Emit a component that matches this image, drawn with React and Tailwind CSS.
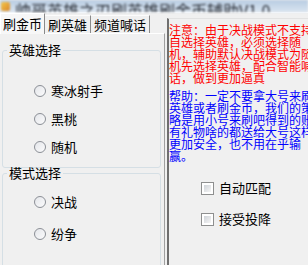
import React from 'react';

const FONT = { fontFamily: '"Noto Sans CJK SC", "Noto Sans", sans-serif' };

const Radio = ({ label }) => (
  <div className="flex items-center h-[14px]">
    <span className="ml-[31px] w-[12px] h-[12px] rounded-full border border-[#8b8f96] bg-gradient-to-br from-[#e4e6ea] to-[#fbfbfc]" />
    <span className="ml-[5px] text-[13px] leading-[14px] text-black">{label}</span>
  </div>
);

const Check = ({ label }) => (
  <div className="flex items-center h-[14px]">
    <span className="ml-[32px] w-[13px] h-[13px] border border-[#8e8f8f] bg-white p-[2px]">
      <span className="block w-full h-full bg-gradient-to-br from-[#cfd3d8] to-[#f6f6f6]" />
    </span>
    <span className="ml-[5px] text-[13px] leading-[14px] text-black">{label}</span>
  </div>
);

const GroupBox = ({ title, children, className }) => (
  <fieldset className={`mx-[2px] w-[159px] border border-[#d5dfe5] rounded-[3px] ${className}`}>
    <legend className="ml-[4px] px-[2px] text-[13px] leading-[14px] text-black">{title}</legend>
    {children}
  </fieldset>
);

export default function App() {
  const red = [
    '注意：由于决战模式不支持',
    '自选择英雄，必须选择随',
    '机，辅助默认决战模式为随',
    '机先选择英雄，配合智能喊',
    '话，做到更加逼真',
  ];
  const blue = [
    '帮助：一定不要拿大号来刷',
    '英雄或者刷金币，我们的策',
    '略是用小号来刷吧得到的账',
    '有礼物啥的都送给大号这样',
    '更加安全，也不用在乎输',
    '赢。',
  ];

  return (
    <div className="w-[308px] h-[265px] overflow-hidden bg-[#f0f0f0] flex flex-col" style={FONT}>
      {/* Title bar (blurred, cut off) */}
      <div className="h-[12px] shrink-0 overflow-hidden bg-gradient-to-b from-[#b8cce2] to-[#d9e4f0] flex items-end blur-[0.8px]">
        <span className="ml-[1px] mb-[1px] w-[9px] h-[9px] rounded-[2px] bg-gradient-to-br from-[#f4c84a] to-[#d9862a]" />
        <span className="ml-[5px] -mb-[6px] text-[16px] leading-[16px] text-[#2a2f38] whitespace-nowrap">
          帅哥英雄之刃刷英雄刷金币辅助V1.0
        </span>
      </div>

      <div className="flex flex-1 border-t border-white">
        {/* Left: tab control */}
        <div className="w-[167px] shrink-0 flex flex-col">
          <div className="h-[20px] flex items-end shrink-0">
            <div className="h-[21px] w-[45px] bg-[#f7f7f7] border-t border-l border-white border-r border-r-[#8a8a8a] flex items-center justify-center text-[13px] leading-[14px] text-black relative z-10 -mb-px">
              刷金币
            </div>
            <div className="h-[18px] w-[46px] border-t border-[#fcfcfc] border-r border-r-[#8a8a8a] flex items-center justify-center text-[13px] leading-[14px] text-black">
              刷英雄
            </div>
            <div className="h-[18px] w-[59px] border-t border-[#fcfcfc] border-r border-r-[#8a8a8a] flex items-center justify-center text-[13px] leading-[14px] text-black">
              频道喊话
            </div>
          </div>
          <div className="flex-1 border-t border-t-white border-r border-r-[#a0a0a0] mr-[2px] pt-[9px]">
            <GroupBox title="英雄选择" className="h-[125px]">
              <div className="flex flex-col pt-[27px] gap-[14px]">
                <Radio label="寒冰射手" />
                <Radio label="黑桃" />
                <Radio label="随机" />
              </div>
            </GroupBox>
            <GroupBox title="模式选择" className="-mt-[2px] h-[120px]">
              <div className="flex flex-col pt-[15px] gap-[18px]">
                <Radio label="决战" />
                <Radio label="纷争" />
              </div>
            </GroupBox>
          </div>
        </div>

        {/* Right: notes + options */}
        <div className="flex-1 flex flex-col border-l-2 border-[#6f6f6f] mt-[5px] border-t border-t-[#e2e2e2]">
          <div className="pt-[5px] text-[12px] leading-[12px] whitespace-nowrap">
            {red.map((l) => (
              <div key={l} className="text-[#ff0000]">{l}</div>
            ))}
            <div className="mt-[6px]">
              {blue.map((l) => (
                <div key={l} className="text-[#0000ff]">{l}</div>
              ))}
            </div>
          </div>
          <div className="flex flex-col mt-[19px] gap-[17px]">
            <Check label="自动匹配" />
            <Check label="接受投降" />
          </div>
        </div>
      </div>
    </div>
  );
}
